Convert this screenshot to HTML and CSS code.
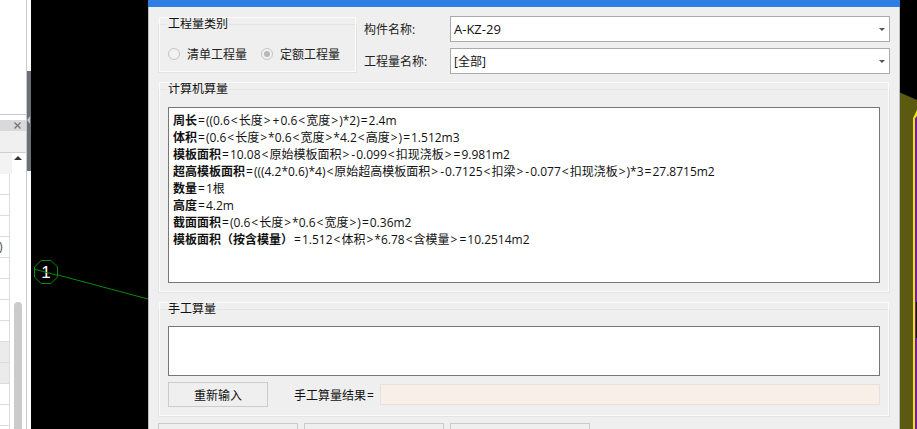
FILE: index.html
```html
<!DOCTYPE html>
<html lang="zh-CN">
<head>
<meta charset="utf-8">
<title>工程量</title>
<link rel="stylesheet" href="styles.css">
</head>
<body>
<div class="screen">
  <aside class="side">
    <div class="side-main">
      <div class="side-top"></div>
      <div class="side-tab"><svg class="close" width="7" height="7" viewBox="0 0 7 7"><path d="M0.5 0.5L6.5 6.5M6.5 0.5L0.5 6.5" stroke="#777" stroke-width="1.4"/></svg></div>
      <div class="side-sub"></div>
      <div class="side-table">
        <div class="side-rows">
          <div class="side-head"></div>
          <div class="side-row"></div>
          <div class="side-row"></div>
          <div class="side-row"></div>
          <div class="side-row"><span class="paren">)</span></div>
          <div class="side-row"></div>
          <div class="side-row"></div>
          <div class="side-row"></div>
          <div class="side-row"></div>
          <div class="side-row shade"></div>
          <div class="side-row shade"></div>
          <div class="side-row"></div>
          <div class="side-row"></div>
        </div>
        <div class="scroll">
          <div class="scroll-up"></div>
          <div class="scroll-thumb"></div>
        </div>
      </div>
    </div>
    <div class="side-strip"><div class="strip-handle"><i class="strip-arrow"></i></div></div>
  </aside>

  <div class="canvas canvas-left">
    <svg class="drawing" width="117" height="429" viewBox="31 0 117 429">
      <path d="M58 275L148 299" stroke="#0a8a0a" stroke-width="1" fill="none"/>
      <path d="M41 260.500L51 260.500L57.500 267L57.500 277L51 283.500L41 283.500L34.500 277L34.500 267Z" stroke="#0a8a0a" stroke-width="1" fill="#000"/>
      <text x="46" y="278" class="node-num">1</text>
      <path d="M34.500 269.200L57.500 275.300" stroke="#0a8a0a" stroke-width="1" fill="none"/>
    </svg>
  </div>

  <main class="dialog">
    <div class="title-bar"></div>
    <div class="dialog-body">
      <div class="top-row">
        <fieldset class="group type-group">
          <legend>工程量类别</legend>
          <div class="radios">
            <span class="radio"></span><span class="radio-text">清单工程量</span>
            <span class="radio on"></span><span class="radio-text">定额工程量</span>
          </div>
        </fieldset>
        <div class="form">
          <div class="form-row">
            <span class="form-label">构件名称:</span>
            <div class="combo"><span>A-KZ-29</span><i class="caret"></i></div>
          </div>
          <div class="form-row">
            <span class="form-label">工程量名称:</span>
            <div class="combo combo-cjk"><span>[全部]</span><i class="caret"></i></div>
          </div>
        </div>
      </div>

      <fieldset class="group calc-group">
        <legend>计算机算量</legend>
        <div class="box calc-box">
          <p><b>周长</b><u>=</u>((0.6<u>&lt;</u>长度<u>&gt;</u><u>+</u>0.6<u>&lt;</u>宽度<u>&gt;</u>)*2)<u>=</u>2.4m</p>
          <p><b>体积</b><u>=</u>(0.6<u>&lt;</u>长度<u>&gt;</u>*0.6<u>&lt;</u>宽度<u>&gt;</u>*4.2<u>&lt;</u>高度<u>&gt;</u>)<u>=</u>1.512m3</p>
          <p><b>模板面积</b><u>=</u>10.08<u>&lt;</u>原始模板面积<u>&gt;</u><u>-</u>0.099<u>&lt;</u>扣现浇板<u>&gt;</u><u>=</u>9.981m2</p>
          <p><b>超高模板面积</b><u>=</u>(((4.2*0.6)*4)<u>&lt;</u>原始超高模板面积<u>&gt;</u><u>-</u>0.7125<u>&lt;</u>扣梁<u>&gt;</u><u>-</u>0.077<u>&lt;</u>扣现浇板<u>&gt;</u>)*3<u>=</u>27.8715m2</p>
          <p><b>数量</b><u>=</u>1根</p>
          <p><b>高度</b><u>=</u>4.2m</p>
          <p><b>截面面积</b><u>=</u>(0.6<u>&lt;</u>长度<u>&gt;</u>*0.6<u>&lt;</u>宽度<u>&gt;</u>)<u>=</u>0.36m2</p>
          <p><b>模板面积（按含模量）</b><u>=</u>1.512<u>&lt;</u>体积<u>&gt;</u>*6.78<u>&lt;</u>含模量<u>&gt;</u><u>=</u>10.2514m2</p>
        </div>
      </fieldset>

      <fieldset class="group manual-group">
        <legend>手工算量</legend>
        <div class="box manual-box"></div>
        <div class="manual-foot">
          <button class="btn redo" type="button">重新输入</button>
          <span class="result-label">手工算量结果<u>=</u></span>
          <div class="result"></div>
        </div>
      </fieldset>

      <div class="bottom-row">
        <button class="btn wide" type="button"></button>
        <button class="btn wide" type="button"></button>
        <button class="btn wide" type="button"></button>
      </div>
    </div>
  </main>

  <div class="canvas canvas-right">
    <svg class="drawing" width="17" height="429" viewBox="900 0 17 429">
      <path d="M900 92.500L917 100L917 429L900 429Z" fill="#5c5a10"/>
      <path d="M913 429L913 118L917 110L917 429Z" fill="#e8e800"/>
      <path d="M915 429L915 118.500L917 116L917 429Z" fill="#7a12b8"/>
      <rect x="916" y="302" width="1" height="36" fill="#111"/>
    </svg>
  </div>
</div>
</body>
</html>
```

FILE: styles.css
```css
* { box-sizing: border-box; }
html, body { margin: 0; padding: 0; }
body {
  width: 917px;
  height: 429px;
  overflow: hidden;
  background: #000;
  font-family: "Open Sans", "Noto Sans CJK SC", sans-serif;
  font-size: 12px;
  color: #111;
}
.screen { display: flex; width: 917px; height: 429px; overflow: hidden; }
u { text-decoration: none; margin: 0 1px; }

/* left docked panel */
.side { display: flex; width: 31px; height: 429px; background: #fff; flex: none; }
.side-main { width: 27px; display: flex; flex-direction: column; border-right: 1px solid #c8c8c8; }
.side-top { height: 115px; border-bottom: 1px solid #c8c8c8; margin-bottom: 5px; flex: none; }
.side-tab { height: 11px; background: #d9d9db; flex: none; display: flex; justify-content: flex-end; align-items: center; padding-right: 5px; }
.close { display: block; }
.side-sub { height: 22px; background: #f0f0f0; border-bottom: 1px solid #d0d0d0; flex: none; }
.side-table { display: flex; flex: 1; min-height: 0; overflow: hidden; }
.side-rows { width: 10px; flex: none; border-right: 1px solid #dcdcdc; }
.side-head { height: 21px; background: #f3f3f3; width: 12px; position: relative; }
.side-row { height: 21px; border-bottom: 1px solid #dcdcdc; overflow: hidden; line-height: 20px; }
.shade { background: #ebebeb; }
.paren { display: block; margin-left: -1px; font-size: 12px; color: #444; }
.scroll { width: 16px; flex: none; display: flex; flex-direction: column; align-items: center; }
.scroll-up { width: 0; height: 0; margin-top: 3px; border-left: 4px solid transparent; border-right: 4px solid transparent; border-bottom: 4px solid #333; flex: none; }
.scroll-thumb { width: 8px; flex: 1; margin-top: 142px; background: #cbcbcb; border-radius: 4px 4px 0 0; }
.side-strip { width: 4px; height: 429px; flex: none; padding-top: 71px; background: #fff; }
.strip-handle { height: 100px; background: #6b7077; position: relative; }
.strip-arrow { position: absolute; left: 0; top: 45px; width: 0; height: 0; border-top: 4px solid transparent; border-bottom: 4px solid transparent; border-right: 3px solid #c4c8cc; }

/* drawing canvases */
.canvas { background: #000; height: 429px; flex: none; position: relative; }
.canvas-left { width: 117px; }
.canvas-right { width: 17px; }
.drawing { display: block; }
.node-num { fill: #fff; font-family: "Liberation Sans", sans-serif; font-size: 17px; text-anchor: middle; }

/* dialog */
.dialog { width: 752px; height: 429px; flex: none; background: #efefef; display: flex; flex-direction: column; overflow: hidden; }
.title-bar { height: 7px; background: #2e7fe1; flex: none; }
.dialog-body { flex: 1; padding: 9px 9px 0 9px; display: flex; flex-direction: column; border-left: 1px solid #b4bcc6; border-right: 1px solid #b4bcc6; }
.top-row { display: flex; height: 65px; flex: none; }
.group { margin: 0; border: 1px solid #e4e4e4; outline: 1px solid #fbfbfb; outline-offset: -2px; padding: 0; min-width: 0; }
.group legend { margin-left: 8px; padding: 0 1px; font-size: 12px; line-height: 16px; height: 16px; }
.type-group { width: 199px; height: 57px; }
.radios { display: flex; align-items: center; padding: 13px 0 0 9px; color: #222; }
.radio { width: 12px; height: 12px; border: 1px solid #c4c4c4; border-radius: 50%; background: #f2f2f2; flex: none; position: relative; }
.radio.on::after { content: ""; position: absolute; left: 2px; top: 2px; width: 6px; height: 6px; border-radius: 50%; background: #b8b8b8; }
.radio-text { margin-left: 7px; margin-right: 14px; white-space: nowrap; }
.form { flex: 1; padding-left: 7px; display: flex; flex-direction: column; gap: 6px; }
.form-row { display: flex; align-items: center; height: 26px; flex: none; }
.form-label { width: 86px; flex: none; color: #222; }
.combo { flex: 1; height: 26px; border: 1px solid #aaa; outline: 1px solid #aaa; outline-offset: -1px; background: #fff; display: flex; align-items: center; justify-content: space-between; padding: 0 4px 0 3px; font-size: 13px; }
.combo-cjk { font-size: 12px; }
.caret { width: 0; height: 0; border-left: 3px solid transparent; border-right: 3px solid transparent; border-top: 3px solid #555; }
.calc-group { height: 212px; flex: none; }
.box { background: #fff; border: 1px solid #777; margin-left: 9px; margin-right: 9px; }
.calc-box { height: 176px; margin-top: 10px; padding: 4px 0 0 4px; }
.calc-box p { margin: 0; height: 17px; line-height: 17px; white-space: nowrap; font-size: 12px; color: #111; }
.calc-box b { font-weight: 700; }
.manual-group { height: 116px; margin-top: 8px; flex: none; }
.manual-box { height: 50px; margin-top: 9px; }
.manual-foot { display: flex; align-items: center; margin: 6px 9px 0 9px; }
.btn { background: #efefef; border: 1px solid #cbcbcb; font: inherit; color: #111; padding: 0; }
.redo { width: 100px; height: 25px; flex: none; }
.result-label { margin-left: 26px; width: 86px; flex: none; white-space: nowrap; }
.result { flex: 1; height: 21px; background: #f9efe6; border: 1px solid #e2e2e2; }
.bottom-row { display: flex; gap: 6px; margin-top: 6px; }
.wide { width: 140px; height: 30px; flex: none; }
```
